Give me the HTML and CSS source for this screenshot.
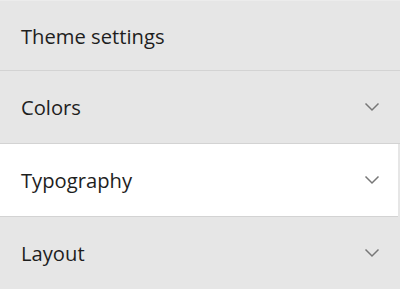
FILE: index.html
```html
<!DOCTYPE html>
<html>
<head>
<meta charset="utf-8">
<link rel="stylesheet" href="styles.css">
</head>
<body>
<div class="panel">
  <div class="header">Theme settings</div>
  <div class="row"><span class="label">Colors</span><svg class="chev" width="16" height="10" viewBox="0 0 16 10"><path d="M1.5 1.5 L8 8 L14.5 1.5" fill="none" stroke="#777" stroke-width="1.5"/></svg></div>
  <div class="row active"><span class="label">Typography</span><svg class="chev" width="16" height="10" viewBox="0 0 16 10"><path d="M1.5 1.5 L8 8 L14.5 1.5" fill="none" stroke="#777" stroke-width="1.5"/></svg></div>
  <div class="row last"><span class="label">Layout</span><svg class="chev" width="16" height="10" viewBox="0 0 16 10"><path d="M1.5 1.5 L8 8 L14.5 1.5" fill="none" stroke="#777" stroke-width="1.5"/></svg></div>
</div>
</body>
</html>
```
FILE: styles.css
```css
html, body {
  margin: 0;
  padding: 0;
  background: #e6e6e6;
}
.panel {
  width: 400px;
  height: 289px;
  font-family: "Open Sans", "Noto Sans", sans-serif;
  color: #1e1e1e;
  border-top: 1px solid #ececec;
  box-sizing: border-box;
  overflow: hidden;
}
.header {
  height: 69px;
  display: flex;
  align-items: center;
  padding-left: 21px;
  font-size: 20.2px;
  font-weight: 500;
  border-bottom: 1px solid #d3d3d3;
}
.row {
  height: 72px;
  display: flex;
  align-items: center;
  justify-content: space-between;
  padding: 0 20px 0 21px;
  font-size: 20.2px;
  font-weight: 500;
  border-bottom: 1px solid #d3d3d3;
}
.row.active {
  background: #fff;
  margin-right: 2px;
  padding-right: 18px;
}
.row.last {
  border-bottom: none;
}
.chev {
  display: block;
}
```
